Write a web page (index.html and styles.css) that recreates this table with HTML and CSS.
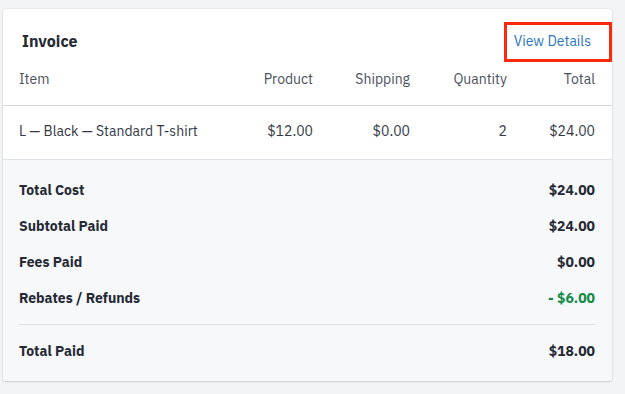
FILE: index.html
```html
<!DOCTYPE html>
<html>
<head>
<meta charset="utf-8">
<link rel="stylesheet" href="styles.css">
</head>
<body>
<div class="page">
  <div class="card">
    <div class="top">
      <div class="title-row">
        <h2 class="title">Invoice</h2>
        <a class="link" href="#">View Details</a>
      </div>
      <div class="grid cols">
        <div>Item</div>
        <div class="r">Product</div>
        <div class="r">Shipping</div>
        <div class="r">Quantity</div>
        <div class="r">Total</div>
      </div>
      <div class="grid item-row">
        <div>L — Black — Standard T-shirt</div>
        <div class="r">$12.00</div>
        <div class="r">$0.00</div>
        <div class="r">2</div>
        <div class="r">$24.00</div>
      </div>
    </div>
    <div class="summary">
      <div class="sum-row"><span>Total Cost</span><span>$24.00</span></div>
      <div class="sum-row"><span>Subtotal Paid</span><span>$24.00</span></div>
      <div class="sum-row"><span>Fees Paid</span><span>$0.00</span></div>
      <div class="sum-row"><span>Rebates / Refunds</span><span class="green">- $6.00</span></div>
      <div class="sum-row total"><span>Total Paid</span><span>$18.00</span></div>
    </div>
  </div>
</div>
</body>
</html>
```

FILE: styles.css
```css
* { box-sizing: border-box; }
html, body {
  margin: 0;
  background: #f3f4f6;
  font-family: "IBM Plex Sans", "Noto Sans", "Open Sans", sans-serif;
  font-size: 14px;
  color: #2f3440;
}
.page {
  padding: 9px 13px 13px 3px;
}
.card {
  background: #fff;
  border-radius: 3px;
  box-shadow: 0 0 0 1px rgba(0,0,0,0.04), 0 1px 2px rgba(0,0,0,0.12);
  overflow: hidden;
}
.top {
  padding: 0 17px 0 16px;
}
.title-row {
  display: flex;
  justify-content: space-between;
  align-items: center;
  height: 24px;
  margin-top: 20px;
}
.title {
  margin: 0;
  font-size: 16px;
  font-weight: 700;
  color: #252a34;
  padding-left: 3px;
}
.link {
  position: relative;
  color: #2a77c0;
  text-decoration: none;
  margin-right: 4px;
}
.link::after {
  content: "";
  position: absolute;
  left: -10px;
  right: -21px;
  top: -10px;
  bottom: -12px;
  border: 3px solid #fc2a0c;
}
.grid {
  display: grid;
  grid-template-columns: 1fr 97px 97px 97px 88px;
  line-height: 20px;
}
.r { text-align: right; }
.cols {
  padding: 16px 17px 16px 16px;
  color: #4b505b;
  border-bottom: 1px solid #d3d7de;
  margin: 0 -17px 0 -16px;
}
.item-row {
  padding: 15px 0 18px;
  color: #333844;
}
.summary {
  background: #f7f8fa;
  border-top: 1px solid #dfe2e7;
  padding: 20px 17px 20px 16px;
}
.sum-row {
  display: flex;
  justify-content: space-between;
  line-height: 20px;
  font-weight: 700;
  color: #252a34;
  margin-bottom: 16px;
}
.sum-row.total {
  border-top: 1px solid #dfe1e6;
  padding-top: 16px;
  margin-bottom: 0;
}
.green { color: #138a45; }
```
